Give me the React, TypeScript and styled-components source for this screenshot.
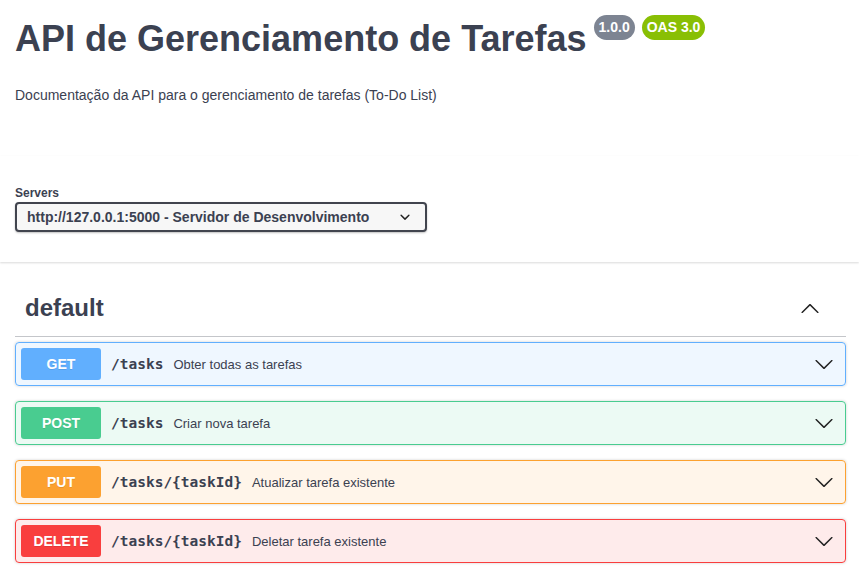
import styled, { createGlobalStyle } from 'styled-components'

const GlobalStyle = createGlobalStyle`
  html, body {
    margin: 0;
    padding: 0;
    background: #fff;
  }

  body {
    font-family: "Liberation Sans", Arial, sans-serif;
    color: #3b4151;
  }
`

const methodColors: Record<string, string> = {
  GET: '97, 175, 254',
  POST: '73, 204, 144',
  PUT: '252, 161, 48',
  DELETE: '249, 62, 62'
}

const InfoSection = styled.section`
  padding: 18px 13px 0 15px;
`

const Title = styled.h2`
  display: flex;
  align-items: flex-start;
  gap: 7px;
  margin: 0;
  font-size: 36px;
  font-weight: 700;
  line-height: 41px;
  color: #3b4151;
`

const Badge = styled.small<{ $bg: string }>`
  display: inline-block;
  margin-top: -3px;
  padding: 4px 5px;
  border-radius: 57px;
  background: ${(p) => p.$bg};
  color: #fff;
  font-size: 14px;
  font-weight: 700;
  line-height: 17px;
`

const Description = styled.p`
  margin: 28px 0 0;
  font-size: 14px;
  line-height: 16px;
  color: #3b4151;
`

const SchemeContainer = styled.section`
  margin-top: 53px;
  padding: 30px 13px 30px 15px;
  background: #fff;
  box-shadow: 0 1px 2px 0 rgba(0, 0, 0, 0.15);
`

const ServersLabel = styled.div`
  font-size: 12px;
  font-weight: 700;
  line-height: 14px;
  color: #3b4151;
  margin-bottom: 2px;
`

const Select = styled.div`
  display: flex;
  align-items: center;
  justify-content: space-between;
  box-sizing: border-box;
  width: 412px;
  height: 30px;
  padding: 0 10px;
  border: 2px solid #41444e;
  border-radius: 4px;
  background: #f7f7f7;
  box-shadow: 0 1px 2px 0 rgba(0, 0, 0, 0.25);
  font-size: 14px;
  font-weight: 700;
  color: #3b4151;
`

const Operations = styled.section`
  padding: 26px 13px 0 15px;
`

const TagHeader = styled.h3`
  display: flex;
  align-items: center;
  margin: 0 0 5px;
  padding: 6px 16px 14px 10px;
  border-bottom: 1px solid rgba(59, 65, 81, 0.3);
  font-size: 24px;
  font-weight: 700;
  line-height: 28px;
  color: #3b4151;
`

const TagName = styled.span`
  flex: 1;
`

const ExpandButton = styled.span`
  display: flex;
  padding: 0 10px;
`

const OpBlock = styled.div<{ $rgb: string }>`
  margin-bottom: 15px;
  border: 1px solid rgb(${(p) => p.$rgb});
  border-radius: 4px;
  background: rgba(${(p) => p.$rgb}, 0.1);
  box-shadow: 0 0 3px rgba(0, 0, 0, 0.19);
`

const OpSummary = styled.div`
  display: flex;
  align-items: center;
  padding: 5px;
`

const Method = styled.span<{ $rgb: string }>`
  display: inline-block;
  min-width: 80px;
  padding: 7px 0;
  border-radius: 3px;
  background: rgb(${(p) => p.$rgb});
  color: #fff;
  font-size: 14px;
  font-weight: 700;
  line-height: 18px;
  text-align: center;
  text-shadow: 0 1px 0 rgba(0, 0, 0, 0.1);
`

const Path = styled.span`
  padding: 0 10px;
  font-family: "DejaVu Sans Mono", monospace;
  font-size: 14.5px;
  font-weight: 700;
  color: #3b4151;
`

const OpDescription = styled.span`
  flex: 1;
  font-size: 13px;
  color: #3b4151;
`

const ArrowWrap = styled.span`
  display: flex;
  margin-right: 6px;
`

const ArrowDown = () => (
  <svg width={20} height={20} viewBox="0 0 20 20" fill="#222">
    <path d="M17.418 6.109c.272-.268.709-.268.979 0s.271.701 0 .969l-7.908 7.83c-.27.268-.707.268-.979 0l-7.908-7.830c-.27-.268-.27-.701 0-.969.271-.268.709-.268.979 0L10 13.25l7.418-7.141z" />
  </svg>
)

const ArrowUp = () => (
  <svg width={20} height={20} viewBox="0 0 20 20" fill="#222">
    <path d="M17.418 14.908c.272.268.709.268.979 0s.271-.701 0-.969l-7.908-7.83c-.27-.268-.707-.268-.979 0l-7.908 7.83c-.27.268-.27.701 0 .969.271.268.709.268.979 0L10 7.767l7.418 7.141z" />
  </svg>
)

const SelectChevron = () => (
  <svg width={20} height={20} viewBox="0 0 20 20" fill="#222">
    <path d="M13.418 7.859a.695.695 0 0 1 .978 0 .68.68 0 0 1 0 .969l-3.908 3.83a.697.697 0 0 1-.979 0l-3.908-3.830a.68.68 0 0 1 0-.969.695.695 0 0 1 .978 0L10 11l3.418-3.141z" />
  </svg>
)

const operations = [
  { method: 'GET', path: '/tasks', summary: 'Obter todas as tarefas' },
  { method: 'POST', path: '/tasks', summary: 'Criar nova tarefa' },
  { method: 'PUT', path: '/tasks/{taskId}', summary: 'Atualizar tarefa existente' },
  { method: 'DELETE', path: '/tasks/{taskId}', summary: 'Deletar tarefa existente' }
]

export default function App() {
  return (
    <>
      <GlobalStyle />
      <InfoSection>
        <Title>
          <span>API de Gerenciamento de Tarefas</span>
          <Badge $bg="#7d8492">1.0.0</Badge>
          <Badge $bg="#89bf04">OAS 3.0</Badge>
        </Title>
        <Description>
          Documentação da API para o gerenciamento de tarefas (To-Do List)
        </Description>
      </InfoSection>

      <SchemeContainer>
        <ServersLabel>Servers</ServersLabel>
        <Select>
          http://127.0.0.1:5000 - Servidor de Desenvolvimento
          <SelectChevron />
        </Select>
      </SchemeContainer>

      <Operations>
        <TagHeader>
          <TagName>default</TagName>
          <ExpandButton>
            <ArrowUp />
          </ExpandButton>
        </TagHeader>
        {operations.map((op) => (
          <OpBlock key={op.method} $rgb={methodColors[op.method]}>
            <OpSummary>
              <Method $rgb={methodColors[op.method]}>{op.method}</Method>
              <Path>{op.path}</Path>
              <OpDescription>{op.summary}</OpDescription>
              <ArrowWrap>
                <ArrowDown />
              </ArrowWrap>
            </OpSummary>
          </OpBlock>
        ))}
      </Operations>
    </>
  )
}
